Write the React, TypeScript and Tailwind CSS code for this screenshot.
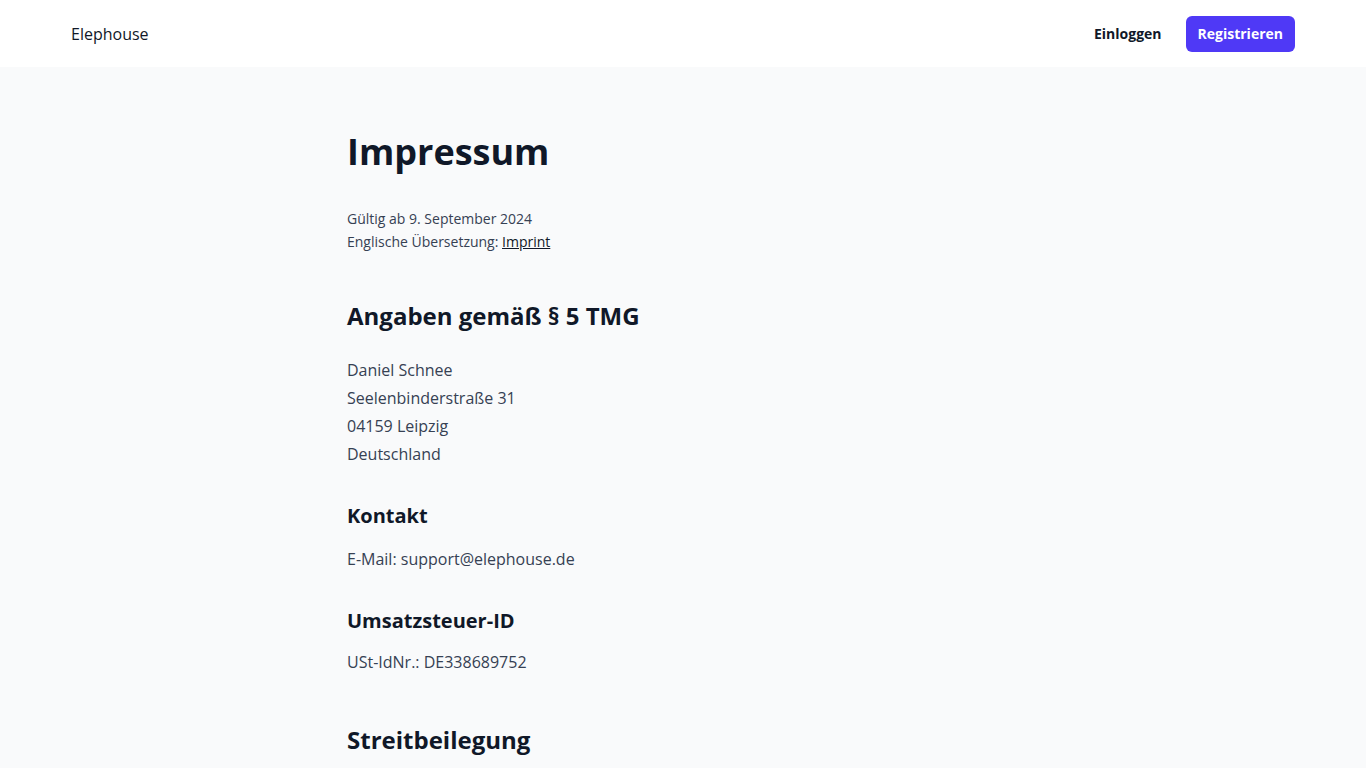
export default function App() {
  return (
    <div className="min-h-screen bg-gray-50 font-['Open_Sans',sans-serif] text-gray-700">
      {/* Header */}
      <header className="bg-white">
        <div className="max-w-7xl mx-auto px-7 h-[67px] flex items-center justify-between">
          <a href="#" className="text-base text-gray-900">Elephouse</a>
          <nav className="flex items-center gap-6">
            <a href="#" className="text-sm font-bold text-gray-900">Einloggen</a>
            <a href="#" className="inline-flex h-9 items-center rounded-md bg-indigo-600 px-3 text-sm font-bold text-white">
              Registrieren
            </a>
          </nav>
        </div>
      </header>

      {/* Content */}
      <main className="max-w-2xl mx-auto pt-[65px] pb-24">
        <h1 className="text-4xl leading-10 font-bold text-gray-900">Impressum</h1>

        <div className="mt-[35px] text-sm leading-[23px] text-gray-700">
          <p>Gültig ab 9. September 2024</p>
          <p>
            Englische Übersetzung:{' '}
            <a href="#" className="underline text-gray-900">Imprint</a>
          </p>
        </div>

        <h2 className="mt-[47px] text-2xl leading-8 font-bold text-gray-900">Angaben gemäß § 5 TMG</h2>
        <p className="mt-6 text-base leading-7">
          Daniel Schnee<br />
          Seelenbinderstraße 31<br />
          04159 Leipzig<br />
          Deutschland
        </p>

        <h3 className="mt-[34px] text-xl leading-7 font-bold text-gray-900">Kontakt</h3>
        <p className="mt-[15px] text-base leading-7">E-Mail: support@elephouse.de</p>

        <h3 className="mt-[34px] text-xl leading-7 font-bold text-gray-900">Umsatzsteuer-ID</h3>
        <p className="mt-[13px] text-base leading-7">USt-IdNr.: DE338689752</p>

        <h2 className="mt-12 text-2xl leading-8 font-bold text-gray-900">Streitbeilegung</h2>
        <p className="mt-6 text-base leading-7">
          Die Europäische Kommission stellt eine Plattform zur Online-Streitbeilegung (OS) bereit:{' '}
          <a href="#" className="underline text-gray-900">https://ec.europa.eu/consumers/odr/</a>.
          Unsere E-Mail-Adresse finden Sie oben im Impressum.
        </p>
        <p className="mt-5 text-base leading-7">
          Wir sind nicht bereit oder verpflichtet, an Streitbeilegungsverfahren vor einer
          Verbraucherschlichtungsstelle teilzunehmen.
        </p>
      </main>
    </div>
  )
}
